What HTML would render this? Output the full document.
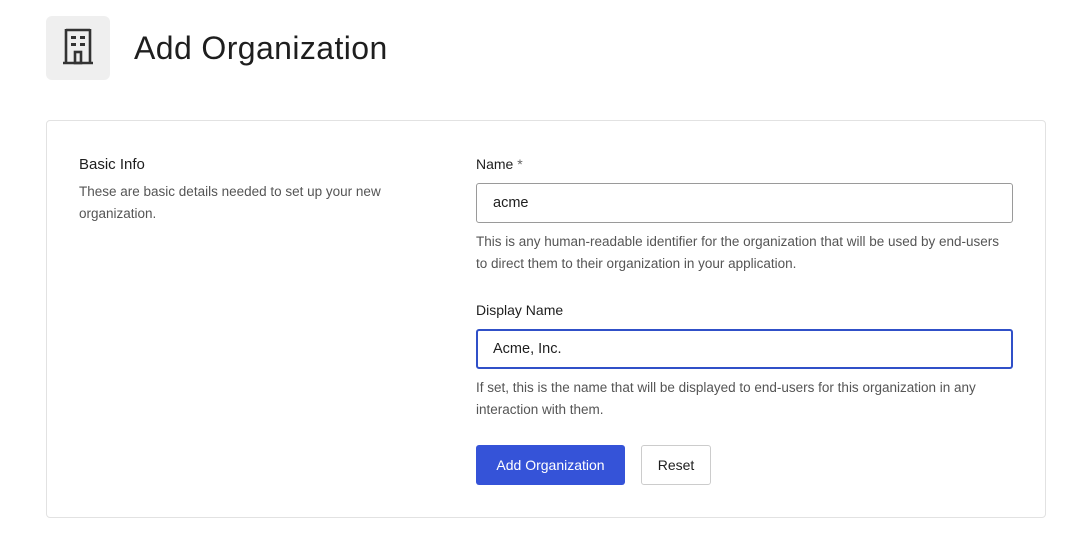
<!DOCTYPE html>
<html><head><style>
*{box-sizing:border-box;margin:0;padding:0}
body{width:1090px;height:551px;background:#fff;font-family:"Liberation Sans",sans-serif;color:#1e1e1e;position:relative;overflow:hidden}
.abs{position:absolute}
.icon{left:46px;top:16px;width:64px;height:64px;background:#efefef;border-radius:6px}
.card{left:46px;top:120px;width:1000px;height:398px;border:1px solid #e2e2e2;border-radius:4px}
.t{font-size:15px}
.s{font-size:13.5px;color:#555;line-height:22px}
.inp{left:476px;width:537px;height:40px;border:1px solid #9a9a9a;border-radius:3px;font-size:14.5px;padding:11px 16px}
.btn{height:40px;border-radius:3px;font-size:14px;text-align:center;line-height:40px}
</style></head><body>
<div class="abs icon">
<svg width="64" height="64" viewBox="0 0 64 64"><g fill="none" stroke="#333" stroke-width="2.6"><path d="M20 14h24M20 13v34M44 13v34M17 47h30"/><rect x="29" y="36" width="6" height="11"/></g>
<g fill="#333"><rect x="25" y="20" width="5" height="3"/><rect x="34" y="20" width="5" height="3"/><rect x="25" y="27" width="5" height="3"/><rect x="34" y="27" width="5" height="3"/></g></svg>
</div>
<div class="abs" style="left:134px;top:30px;font-size:32px;letter-spacing:0.4px">Add Organization</div>
<div class="abs card"></div>
<div class="abs t" style="left:79px;top:156px">Basic Info</div>
<div class="abs s" style="left:79px;top:181px;width:345px">These are basic details needed to set up your new organization.</div>
<div class="abs" style="left:476px;top:156px;font-size:14px">Name <span style="color:#666">*</span></div>
<div class="abs inp" style="top:183px">acme</div>
<div class="abs s" style="left:476px;top:231px;width:530px">This is any human-readable identifier for the organization that will be used by end-users to direct them to their organization in your application.</div>
<div class="abs" style="left:476px;top:302px;font-size:14px">Display Name</div>
<div class="abs inp" style="top:329px;border:2px solid #3050c8;padding:10px 15px">Acme, Inc.</div>
<div class="abs s" style="left:476px;top:377px;width:545px">If set, this is the name that will be displayed to end-users for this organization in any interaction with them.</div>
<div class="abs btn" style="left:476px;top:445px;width:149px;background:#3553d8;color:#fff">Add Organization</div>
<div class="abs btn" style="left:641px;top:445px;width:70px;border:1px solid #ccc;line-height:38px">Reset</div>
</body></html>
